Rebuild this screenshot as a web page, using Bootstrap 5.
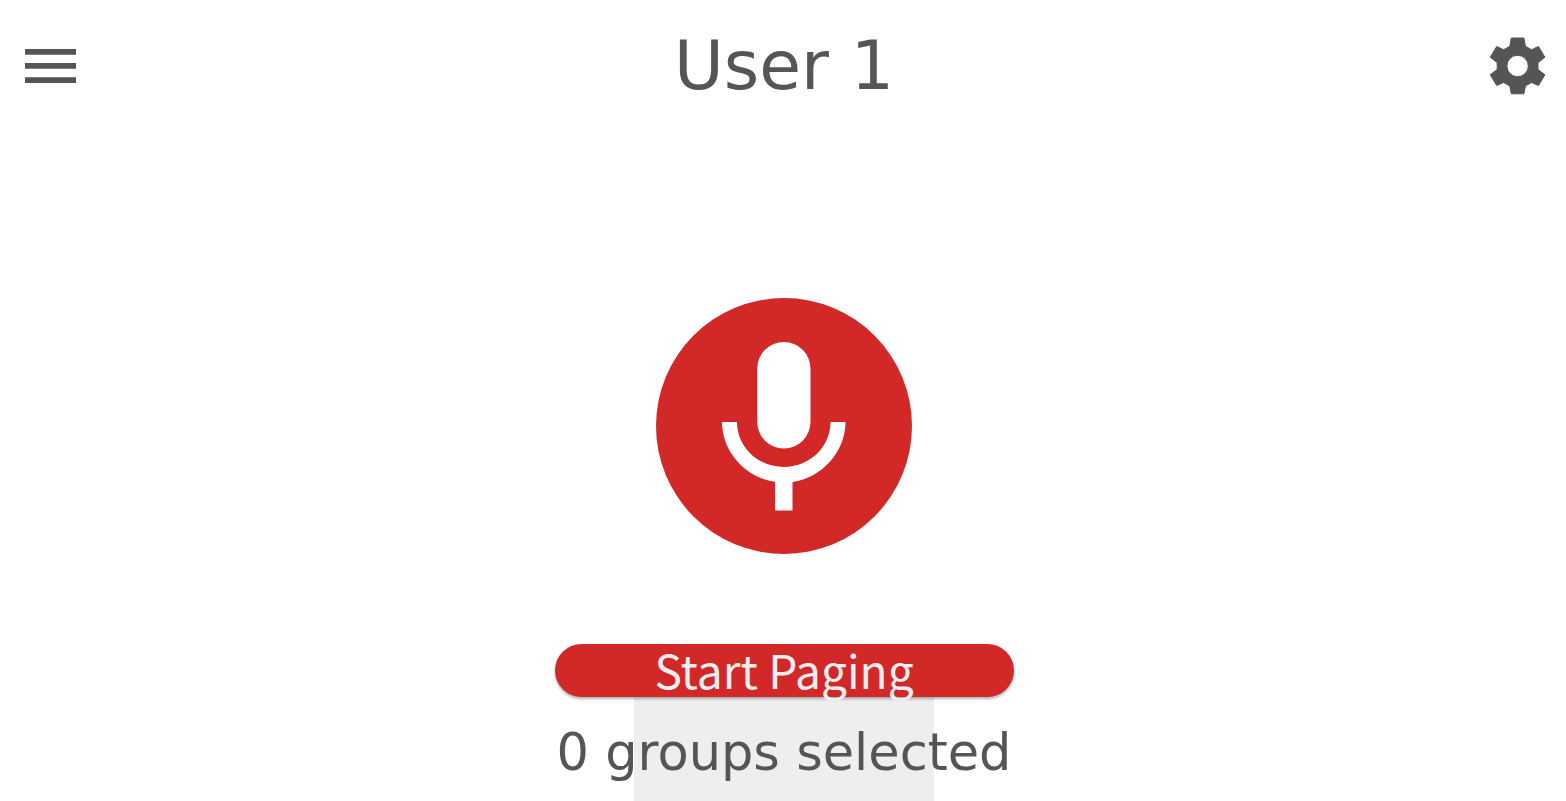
<!DOCTYPE html>
<html lang="en">
<head>
<meta charset="utf-8">
<meta name="viewport" content="width=device-width, initial-scale=1">
<title>Paging</title>
<link href="https://cdn.jsdelivr.net/npm/bootstrap@5.3.0/dist/css/bootstrap.min.css" rel="stylesheet">
<style>
body { color: #555; font-family: "DejaVu Sans", sans-serif; }
.page-title { padding: 26px 0 26px 2px; font-size: 68px; line-height: 80px; }
.icon-btn { color: #555; line-height: 0; }
.mic-btn { width: 256px; height: 256px; background: #d32828; color: #fff; line-height: 0; }
.paging-area { padding: 166px 0 0 2px; }
.paging-btn { width: 459px; height: 53px; margin-top: 90px; background: #d32828; color: #eee; font: 46px/48px "Noto Sans CJK SC", sans-serif; box-shadow: 0 2px 3px rgba(0,0,0,.3); }
.selection { height: 104px; font-size: 51px; line-height: 60px; }
.selection-panel { width: 300px; background: #eee; }
.selection-text { padding-top: 26px; }
</style>
</head>
<body class="bg-white min-vh-100 d-flex flex-column overflow-hidden">
<header class="d-flex justify-content-between align-items-center">
  <button type="button" class="icon-btn border-0 bg-transparent p-0" aria-label="Menu">
    <svg width="100" height="132" viewBox="0 0 100 132" fill="currentColor"><path d="M25 49h51v5.700H25zM25 63h51v5.700H25zM25 77.300h51v5.700H25z"/></svg>
  </button>
  <h1 class="page-title fw-normal m-0">User 1</h1>
  <button type="button" class="icon-btn border-0 bg-transparent p-0" aria-label="Settings">
    <svg width="100" height="132" viewBox="0 0 100 132" fill="currentColor" stroke="currentColor" stroke-linejoin="round" fill-rule="evenodd"><path d="M45.300 38H57.900L59.400 46.300L65.500 49.700L72.500 46.500L78.900 57.200L72 62.700V69.500L78.900 74.800L72.500 85.500L65.500 82.500L59.400 86L57.900 93.800H45.300L43.800 86L37.700 82.500L30.700 85.500L24.300 74.800L31.200 69.500V62.700L24.300 57.200L30.700 46.500L37.700 49.700L43.800 46.300zM51.600 55.300a10.700 10.700 0 1 0 0 21.400a10.700 10.700 0 1 0 0-21.400z"/></svg>
  </button>
</header>
<main class="paging-area d-flex flex-column align-items-center">
  <button type="button" class="mic-btn border-0 rounded-circle p-0" aria-label="Microphone">
    <svg width="256" height="256" viewBox="656 298 256 256" fill="currentColor"><rect x="757.200" y="342" width="53.300" height="106.500" rx="26.650"/><path d="M722 422h15c0 25 21 45 46.800 45s46.700-20 46.700-45h15c0 30-24 56-53 60v28.500h-17.400V482c-29-4-53.100-30-53.100-60z"/></svg>
  </button>
  <button type="button" class="paging-btn border-0 rounded-pill px-0 pt-0 pb-1 position-relative z-1">Start Paging</button>
  <div class="selection position-relative d-flex justify-content-center">
    <div class="selection-panel"></div>
    <p class="selection-text position-absolute top-0 m-0 text-nowrap">0 groups selected</p>
  </div>
</main>
<script src="https://cdn.jsdelivr.net/npm/bootstrap@5.3.0/dist/js/bootstrap.bundle.min.js"></script>
</body>
</html>
